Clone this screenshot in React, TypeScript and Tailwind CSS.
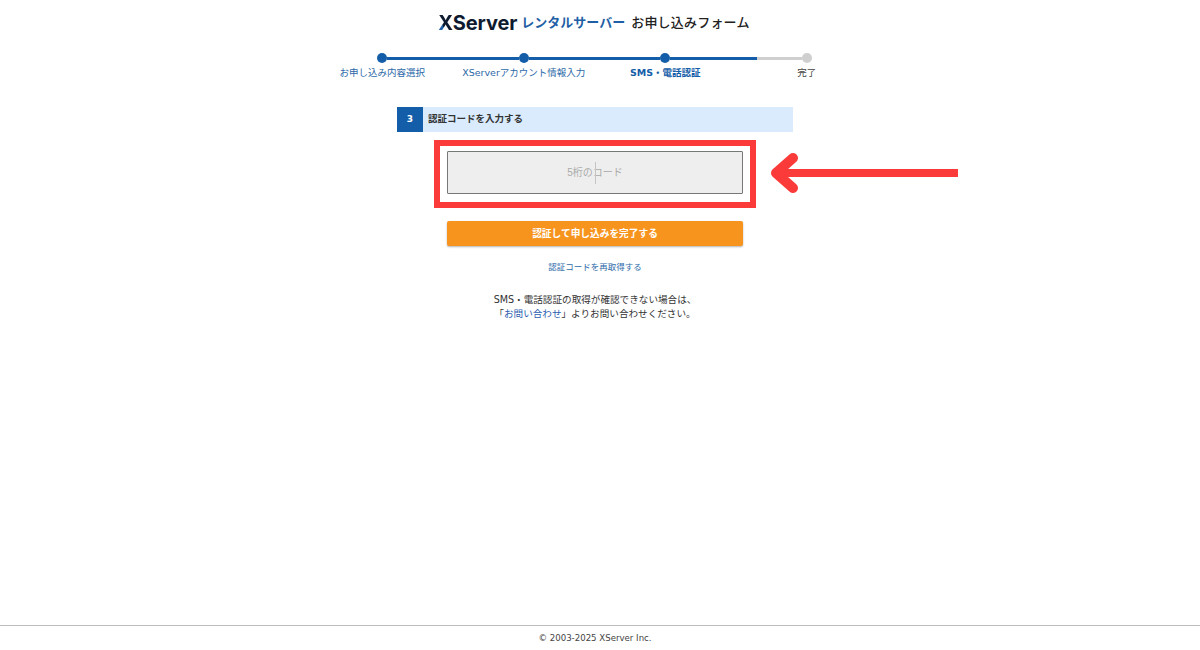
const jp = "font-['Liberation_Sans','Noto_Sans_CJK_JP',sans-serif]";
const latin = "font-['DejaVu_Sans','Noto_Sans_CJK_JP',sans-serif]";

const steps = [
  { label: "お申し込み内容選択", left: "bg-transparent", right: "bg-[#145da8]", dot: "bg-[#145da8]", text: "text-[#2c69a8] font-normal", fill: 0 },
  { label: "XServerアカウント情報入力", left: "bg-[#145da8]", right: "bg-[#145da8]", dot: "bg-[#145da8]", text: "text-[#2c69a8] font-normal", fill: 0 },
  { label: "SMS・電話認証", left: "bg-[#145da8]", right: "bg-[#145da8]", dot: "bg-[#145da8]", text: "text-[#145da8] font-bold", fill: 0 },
  { label: "完了", left: "bg-[#cfcfcf]", right: "bg-transparent", dot: "bg-[#cfcfcf]", text: "text-[#444] font-normal", fill: 21 },
];

function Stepper() {
  return (
    <div className="grid grid-cols-4 w-[566px] mt-[19px] ml-[-11px]">
      {steps.map((step) => (
        <div key={step.label} className="flex flex-col items-center">
          <div className="flex items-center w-full">
            <div className={`h-[3px] flex-1 ${step.left}`}>
              {step.fill > 0 && <div className="h-full bg-[#145da8]" style={{ width: step.fill }}></div>}
            </div>
            <div className={`w-[10px] h-[10px] rounded-full ${step.dot}`}></div>
            <div className={`h-[3px] flex-1 ${step.right}`}></div>
          </div>
          <div className={`mt-[3px] text-[9.5px] leading-[14px] whitespace-nowrap ${latin} ${step.text}`}>{step.label}</div>
        </div>
      ))}
    </div>
  );
}

export default function App() {
  return (
    <div className={`flex flex-col items-center w-full h-[650px] bg-white overflow-hidden ${jp}`}>
      {/* Header logo */}
      <div className="flex items-center h-[22px] mt-[12px] ml-[-12px] whitespace-nowrap">
        <span className="font-['Inter',sans-serif] font-bold text-[20px] tracking-[-0.1px] text-[#0e1a30]">
          <span className="bg-[linear-gradient(to_top_right,#1f5fa6_36%,#0e1a30_36%)] bg-clip-text text-transparent">X</span>Server
        </span>
        <span className="ml-[4px] font-bold text-[13px] text-[#1f5fa6]">レンタルサーバー</span>
        <span className="ml-[6px] font-medium text-[13px] tracking-[0.2px] text-[#222]">お申し込みフォーム</span>
      </div>

      <Stepper />

      {/* Section */}
      <div className="flex items-center w-[396px] h-[25px] mt-[27px] bg-[#d9ebfc] ml-[-10px]">
        <div className={`flex items-center justify-center w-[26px] h-[25px] bg-[#145da8] text-white text-[9px] font-bold ${latin}`}>3</div>
        <div className="ml-[5px] text-[9.5px] font-bold text-[#333]">認証コードを入力する</div>
      </div>

      {/* Code input */}
      <div className="relative mt-[8px] ml-[-10px] w-[322px] h-[68px] border-[6px] border-[#fb3a3a] flex justify-center pt-[5px]">
        <div className="relative flex items-center justify-center w-[296px] h-[43px] bg-[#eeeeee] border border-[#777] rounded-[1px] text-[10px] text-[#aaa]">
          5桁のコード
          <span className="absolute left-[147px] top-[10px] w-px h-[22px] bg-[#c4c4c4]"></span>
        </div>
        {/* Arrow */}
        <svg className="absolute left-[330px] top-[6px]" width="190" height="42" viewBox="0 0 190 42" fill="none">
          <path d="M5 21H188" stroke="#fb3a3a" strokeWidth="8" />
          <path d="M23 6L6 21L23 36" stroke="#fb3a3a" strokeWidth="10" strokeLinecap="round" strokeLinejoin="round" />
        </svg>
      </div>

      {/* Submit */}
      <button className="mt-[13px] ml-[-10px] w-[296px] h-[25px] pt-[1px] rounded-[2px] bg-[#f7941e] text-white text-[9.7px] font-bold shadow-[0_1px_2px_rgba(0,0,0,0.3)]">
        認証して申し込みを完了する
      </button>

      <a className="mt-[14px] ml-[-10px] text-[8.5px] leading-[14px] text-[#2c69a8]">認証コードを再取得する</a>

      <div className="mt-[19px] ml-[-10px] text-center text-[9.6px] leading-[14px] text-[#333]">
        <p className={latin}>SMS・電話認証の取得が確認できない場合は、</p>
        <p>「<a className="text-[#2a5db0]">お問い合わせ</a>」よりお問い合わせください。</p>
      </div>

      {/* Footer */}
      <footer className="mt-auto w-full h-[25px] border-t border-[#bdbdbd] flex items-center justify-center pr-[10px] pt-[1px]">
        <span className={`text-[8.6px] text-[#444] ${latin}`}>© 2003-2025 XServer Inc.</span>
      </footer>
    </div>
  );
}
